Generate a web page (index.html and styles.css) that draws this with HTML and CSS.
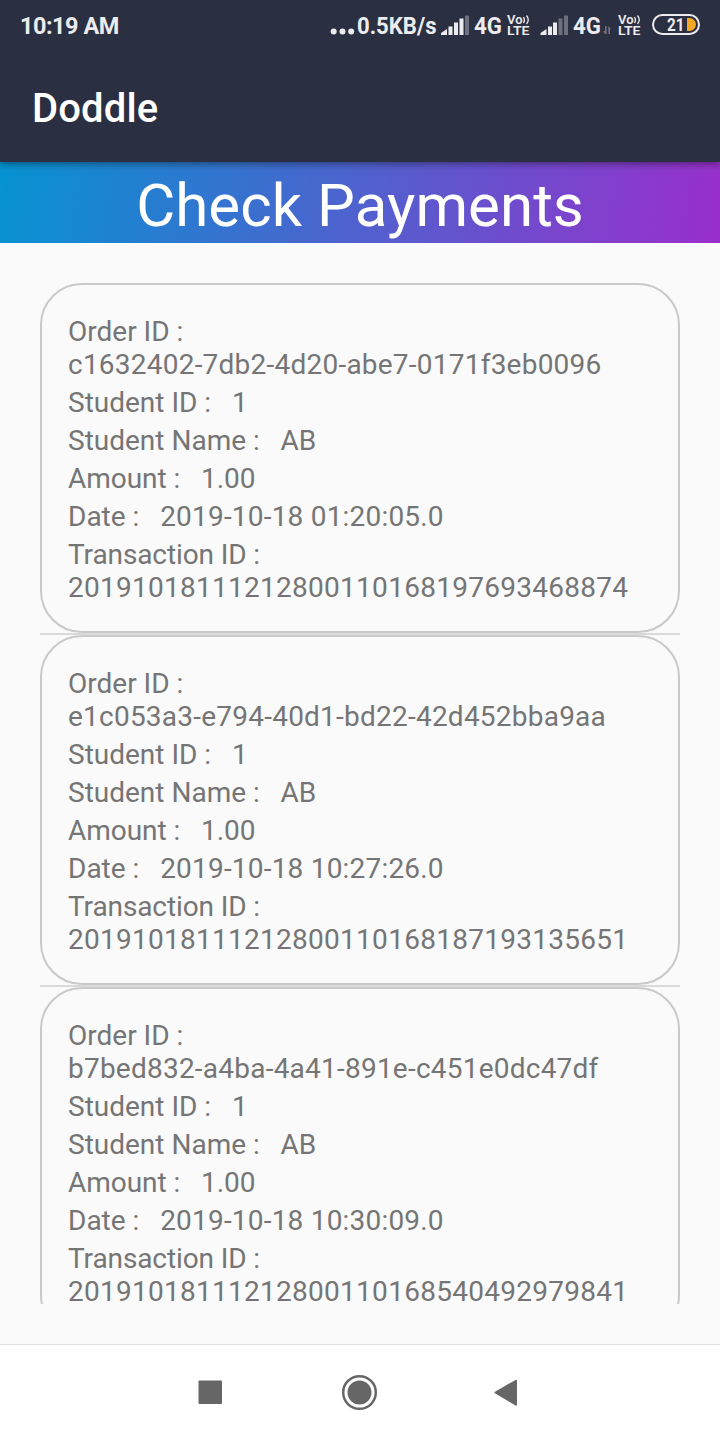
FILE: index.html
```
<!DOCTYPE html>
<html lang="en">
<head>
<meta charset="utf-8">
<title>Doddle</title>
<link rel="stylesheet" href="styles.css">
</head>
<body>
<div class="screen">
  <header class="top">
    <div class="status">
      <span class="clock">10:19 AM</span>
      <svg class="indicators" width="400" height="50" viewBox="320 0 400 50">
        <g fill="#ececee">
          <circle cx="333.7" cy="31.5" r="3"/><circle cx="342.5" cy="31.5" r="3"/><circle cx="351.2" cy="31.5" r="3"/>
          <text class="net" x="357" y="34" textLength="79.500" lengthAdjust="spacingAndGlyphs">0.5KB/s</text>
          <path d="M441 35v-2l6-4v6zM448.500 26.500h4V35h-4zM454 22.500h4V35h-4zM459.500 18.500h4V35h-4z"/>
          <path class="dim" d="M465 15.500h4V35h-4z"/>
          <text class="net" x="474" y="34" textLength="28" lengthAdjust="spacingAndGlyphs">4G</text>
          <path d="M540.500 35v-2l6-4v6zM548 26.500h4V35h-4zM553 22.500h4V35h-4z"/>
          <path class="dim" d="M558.500 18.500h4V35h-4zM564 15.500h4V35h-4z"/>
          <text class="net" x="573" y="34" textLength="28" lengthAdjust="spacingAndGlyphs">4G</text>
          <path class="dim" d="M605 26h1.700v8H605l-2-3h2zM608.300 34v-8l2.700 3h-1v5z"/>
        </g>
        <g id="volte" fill="#ececee">
          <text class="vo" x="507" y="23.500" textLength="15.500" lengthAdjust="spacingAndGlyphs">Vo</text>
          <path d="M523.500 17q2 3 0 6M526.500 15.500q3.500 4.300 0 8.500" fill="none" stroke="#ececee" stroke-width="1.300"/>
          <text class="lte" x="507" y="35.300" textLength="22.500" lengthAdjust="spacingAndGlyphs">LTE</text>
        </g>
        <use href="#volte" x="111"/>
        <rect x="653" y="15" width="46" height="19" rx="9.500" fill="none" stroke="#ececee" stroke-width="2"/>
        <path d="M687 18h2.500a6.500 6.500 0 0 1 0 13H687z" fill="#f5a623"/>
        <text class="level" x="667" y="31" textLength="17.500" lengthAdjust="spacingAndGlyphs">21</text>
      </svg>
    </div>
    <h1 class="app-name">Doddle</h1>
  </header>
  <h2 class="banner">Check Payments</h2>
  <main class="list">
    <section class="card">
      <p>Order ID :<br><span class="uuid">c1632402-7db2-4d20-abe7-0171f3eb0096</span></p>
      <p>Student ID :   1</p>
      <p>Student Name :   AB</p>
      <p class="amount">Amount :   1.00</p>
      <p>Date :   <span class="date">2019-10-18 01:20:05.0</span></p>
      <p><span class="label">Transaction ID :</span><br><span class="txn">20191018111212800110168197693468874</span></p>
    </section>
    <section class="card">
      <p>Order ID :<br><span class="uuid">e1c053a3-e794-40d1-bd22-42d452bba9aa</span></p>
      <p>Student ID :   1</p>
      <p>Student Name :   AB</p>
      <p class="amount">Amount :   1.00</p>
      <p>Date :   <span class="date">2019-10-18 10:27:26.0</span></p>
      <p><span class="label">Transaction ID :</span><br><span class="txn">20191018111212800110168187193135651</span></p>
    </section>
    <section class="card">
      <p>Order ID :<br><span class="uuid">b7bed832-a4ba-4a41-891e-c451e0dc47df</span></p>
      <p>Student ID :   1</p>
      <p>Student Name :   AB</p>
      <p class="amount">Amount :   1.00</p>
      <p>Date :   <span class="date">2019-10-18 10:30:09.0</span></p>
      <p><span class="label">Transaction ID :</span><br><span class="txn">20191018111212800110168540492979841</span></p>
    </section>
  </main>
  <nav class="navbar">
    <svg width="720" height="95" viewBox="0 1345 720 95" fill="#666">
      <rect x="198.500" y="1380.500" width="23.500" height="23.500" rx="1"/>
      <circle cx="359.500" cy="1392.500" r="12"/>
      <circle cx="359.500" cy="1392.500" r="16.300" fill="none" stroke="#666" stroke-width="2.500"/>
      <path d="M495.500 1392.500L516 1380.800V1404.700z" stroke="#666" stroke-width="2" stroke-linejoin="round"/>
    </svg>
  </nav>
</div>
</body>
</html>
```
FILE: styles.css
```
* { box-sizing: border-box; }
body { margin: 0; font-family: Roboto, sans-serif; }
h1, h2, p { margin: 0; }
.screen {
  width: 720px;
  height: 1440px;
  display: flex;
  flex-direction: column;
  overflow: hidden;
  background: #fafafa;
}
.top {
  height: 162px;
  flex: none;
  background: #2b2f42;
  color: #fff;
  box-shadow: 0 1px 8px rgba(0, 0, 0, .5);
  z-index: 1;
}
.status {
  height: 50px;
  display: flex;
  justify-content: space-between;
}
.clock {
  padding: 12px 0 0 20px;
  font-size: 23.500px;
  line-height: 28px;
  font-weight: 700;
  letter-spacing: -.5px;
  color: #ececee;
}
.net { font-size: 24px; font-weight: 700; }
.vo { font-size: 12px; font-weight: 600; }
.lte { font-size: 12px; font-weight: 600; }
.level { font-size: 17.500px; font-weight: 700; fill: #ececee; }
.dim { opacity: .35; }
.app-name {
  padding: 35px 0 0 32px;
  font-size: 40px;
  line-height: 47px;
  font-weight: 500;
  letter-spacing: .15px;
}
.banner {
  height: 81px;
  flex: none;
  padding-top: 8px;
  text-align: center;
  font-size: 60px;
  line-height: 71px;
  font-weight: 400;
  letter-spacing: .06px;
  color: #fff;
  background: linear-gradient(100deg, #0693d2, #9a2fcb);
}
.list {
  height: 1021px;
  flex: none;
  margin: 40px 40px 0;
  overflow: hidden;
}
.card {
  height: 350px;
  padding: 30px 26px 0;
  border: 2px solid #c9c9c9;
  border-radius: 42px;
  color: #757575;
  font-size: 28px;
  line-height: 33px;
}
.card p {
  padding-bottom: 5px;
  white-space: pre;
}
.uuid { letter-spacing: .23px; }
.date { letter-spacing: .2px; }
.txn { letter-spacing: .27px; }
.label { letter-spacing: -.11px; }
.amount { letter-spacing: -.04px; }
.card + .card {
  margin-top: 2px;
  position: relative;
}
.card + .card::before {
  content: "";
  position: absolute;
  left: -2px;
  right: -2px;
  top: -4px;
  height: 2px;
  background: #dadada;
}
.navbar {
  height: 96px;
  flex: none;
  margin-top: 40px;
  border-top: 1px solid #e0e0e0;
  background: #fff;
}
.navbar svg { display: block; }
```
